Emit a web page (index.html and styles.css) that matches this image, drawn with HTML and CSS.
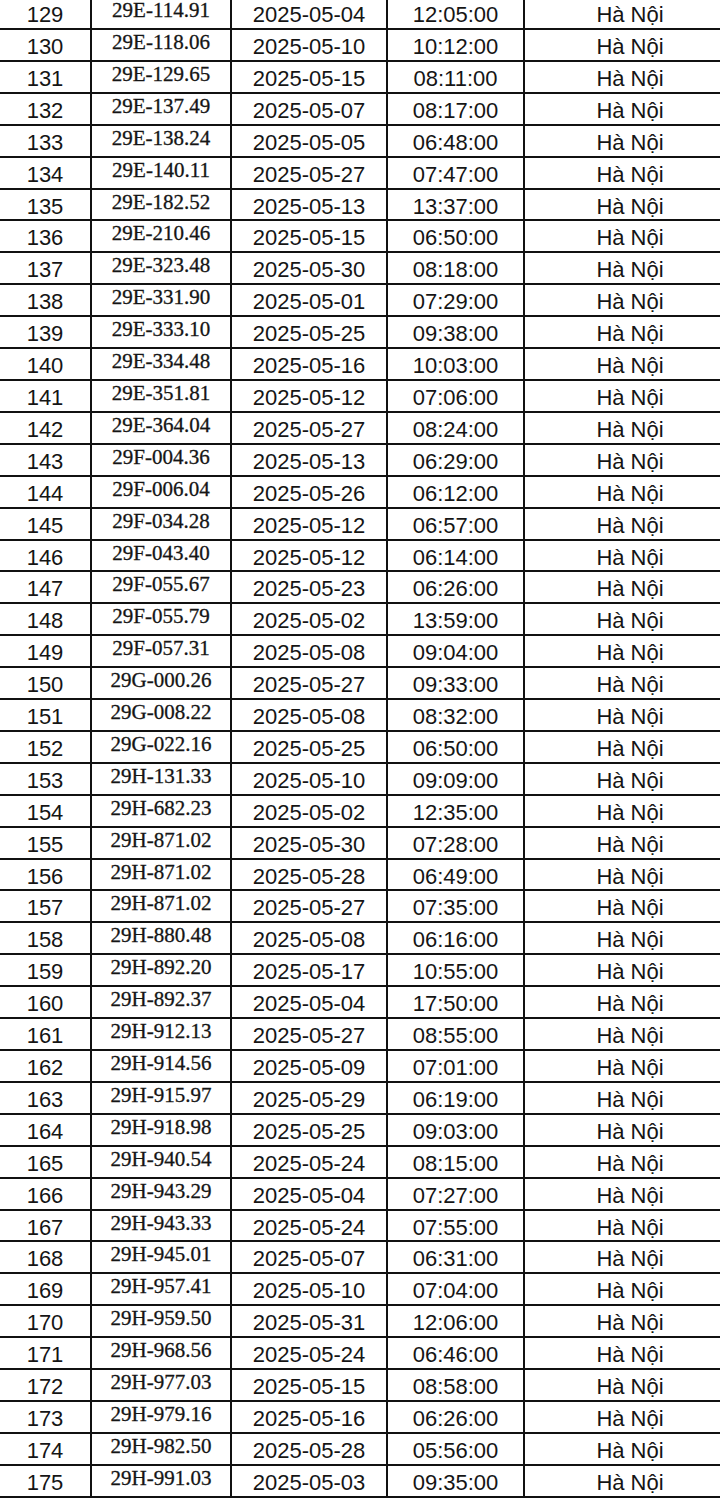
FILE: index.html
```html
<!DOCTYPE html>
<html lang="vi">
<head>
<meta charset="utf-8">
<link rel="stylesheet" href="styles.css">
</head>
<body>
<div class="sheet">
<div class="row"><div class="c n">129</div><div class="c p">29E-114.91</div><div class="c n">2025-05-04</div><div class="c n">12:05:00</div><div class="c n loc">Hà Nội</div></div>
<div class="row"><div class="c n">130</div><div class="c p">29E-118.06</div><div class="c n">2025-05-10</div><div class="c n">10:12:00</div><div class="c n loc">Hà Nội</div></div>
<div class="row"><div class="c n">131</div><div class="c p">29E-129.65</div><div class="c n">2025-05-15</div><div class="c n">08:11:00</div><div class="c n loc">Hà Nội</div></div>
<div class="row"><div class="c n">132</div><div class="c p">29E-137.49</div><div class="c n">2025-05-07</div><div class="c n">08:17:00</div><div class="c n loc">Hà Nội</div></div>
<div class="row"><div class="c n">133</div><div class="c p">29E-138.24</div><div class="c n">2025-05-05</div><div class="c n">06:48:00</div><div class="c n loc">Hà Nội</div></div>
<div class="row"><div class="c n">134</div><div class="c p">29E-140.11</div><div class="c n">2025-05-27</div><div class="c n">07:47:00</div><div class="c n loc">Hà Nội</div></div>
<div class="row"><div class="c n">135</div><div class="c p">29E-182.52</div><div class="c n">2025-05-13</div><div class="c n">13:37:00</div><div class="c n loc">Hà Nội</div></div>
<div class="row"><div class="c n">136</div><div class="c p">29E-210.46</div><div class="c n">2025-05-15</div><div class="c n">06:50:00</div><div class="c n loc">Hà Nội</div></div>
<div class="row"><div class="c n">137</div><div class="c p">29E-323.48</div><div class="c n">2025-05-30</div><div class="c n">08:18:00</div><div class="c n loc">Hà Nội</div></div>
<div class="row"><div class="c n">138</div><div class="c p">29E-331.90</div><div class="c n">2025-05-01</div><div class="c n">07:29:00</div><div class="c n loc">Hà Nội</div></div>
<div class="row"><div class="c n">139</div><div class="c p">29E-333.10</div><div class="c n">2025-05-25</div><div class="c n">09:38:00</div><div class="c n loc">Hà Nội</div></div>
<div class="row"><div class="c n">140</div><div class="c p">29E-334.48</div><div class="c n">2025-05-16</div><div class="c n">10:03:00</div><div class="c n loc">Hà Nội</div></div>
<div class="row"><div class="c n">141</div><div class="c p">29E-351.81</div><div class="c n">2025-05-12</div><div class="c n">07:06:00</div><div class="c n loc">Hà Nội</div></div>
<div class="row"><div class="c n">142</div><div class="c p">29E-364.04</div><div class="c n">2025-05-27</div><div class="c n">08:24:00</div><div class="c n loc">Hà Nội</div></div>
<div class="row"><div class="c n">143</div><div class="c p">29F-004.36</div><div class="c n">2025-05-13</div><div class="c n">06:29:00</div><div class="c n loc">Hà Nội</div></div>
<div class="row"><div class="c n">144</div><div class="c p">29F-006.04</div><div class="c n">2025-05-26</div><div class="c n">06:12:00</div><div class="c n loc">Hà Nội</div></div>
<div class="row"><div class="c n">145</div><div class="c p">29F-034.28</div><div class="c n">2025-05-12</div><div class="c n">06:57:00</div><div class="c n loc">Hà Nội</div></div>
<div class="row"><div class="c n">146</div><div class="c p">29F-043.40</div><div class="c n">2025-05-12</div><div class="c n">06:14:00</div><div class="c n loc">Hà Nội</div></div>
<div class="row"><div class="c n">147</div><div class="c p">29F-055.67</div><div class="c n">2025-05-23</div><div class="c n">06:26:00</div><div class="c n loc">Hà Nội</div></div>
<div class="row"><div class="c n">148</div><div class="c p">29F-055.79</div><div class="c n">2025-05-02</div><div class="c n">13:59:00</div><div class="c n loc">Hà Nội</div></div>
<div class="row"><div class="c n">149</div><div class="c p">29F-057.31</div><div class="c n">2025-05-08</div><div class="c n">09:04:00</div><div class="c n loc">Hà Nội</div></div>
<div class="row"><div class="c n">150</div><div class="c p">29G-000.26</div><div class="c n">2025-05-27</div><div class="c n">09:33:00</div><div class="c n loc">Hà Nội</div></div>
<div class="row"><div class="c n">151</div><div class="c p">29G-008.22</div><div class="c n">2025-05-08</div><div class="c n">08:32:00</div><div class="c n loc">Hà Nội</div></div>
<div class="row"><div class="c n">152</div><div class="c p">29G-022.16</div><div class="c n">2025-05-25</div><div class="c n">06:50:00</div><div class="c n loc">Hà Nội</div></div>
<div class="row"><div class="c n">153</div><div class="c p">29H-131.33</div><div class="c n">2025-05-10</div><div class="c n">09:09:00</div><div class="c n loc">Hà Nội</div></div>
<div class="row"><div class="c n">154</div><div class="c p">29H-682.23</div><div class="c n">2025-05-02</div><div class="c n">12:35:00</div><div class="c n loc">Hà Nội</div></div>
<div class="row"><div class="c n">155</div><div class="c p">29H-871.02</div><div class="c n">2025-05-30</div><div class="c n">07:28:00</div><div class="c n loc">Hà Nội</div></div>
<div class="row"><div class="c n">156</div><div class="c p">29H-871.02</div><div class="c n">2025-05-28</div><div class="c n">06:49:00</div><div class="c n loc">Hà Nội</div></div>
<div class="row"><div class="c n">157</div><div class="c p">29H-871.02</div><div class="c n">2025-05-27</div><div class="c n">07:35:00</div><div class="c n loc">Hà Nội</div></div>
<div class="row"><div class="c n">158</div><div class="c p">29H-880.48</div><div class="c n">2025-05-08</div><div class="c n">06:16:00</div><div class="c n loc">Hà Nội</div></div>
<div class="row"><div class="c n">159</div><div class="c p">29H-892.20</div><div class="c n">2025-05-17</div><div class="c n">10:55:00</div><div class="c n loc">Hà Nội</div></div>
<div class="row"><div class="c n">160</div><div class="c p">29H-892.37</div><div class="c n">2025-05-04</div><div class="c n">17:50:00</div><div class="c n loc">Hà Nội</div></div>
<div class="row"><div class="c n">161</div><div class="c p">29H-912.13</div><div class="c n">2025-05-27</div><div class="c n">08:55:00</div><div class="c n loc">Hà Nội</div></div>
<div class="row"><div class="c n">162</div><div class="c p">29H-914.56</div><div class="c n">2025-05-09</div><div class="c n">07:01:00</div><div class="c n loc">Hà Nội</div></div>
<div class="row"><div class="c n">163</div><div class="c p">29H-915.97</div><div class="c n">2025-05-29</div><div class="c n">06:19:00</div><div class="c n loc">Hà Nội</div></div>
<div class="row"><div class="c n">164</div><div class="c p">29H-918.98</div><div class="c n">2025-05-25</div><div class="c n">09:03:00</div><div class="c n loc">Hà Nội</div></div>
<div class="row"><div class="c n">165</div><div class="c p">29H-940.54</div><div class="c n">2025-05-24</div><div class="c n">08:15:00</div><div class="c n loc">Hà Nội</div></div>
<div class="row"><div class="c n">166</div><div class="c p">29H-943.29</div><div class="c n">2025-05-04</div><div class="c n">07:27:00</div><div class="c n loc">Hà Nội</div></div>
<div class="row"><div class="c n">167</div><div class="c p">29H-943.33</div><div class="c n">2025-05-24</div><div class="c n">07:55:00</div><div class="c n loc">Hà Nội</div></div>
<div class="row"><div class="c n">168</div><div class="c p">29H-945.01</div><div class="c n">2025-05-07</div><div class="c n">06:31:00</div><div class="c n loc">Hà Nội</div></div>
<div class="row"><div class="c n">169</div><div class="c p">29H-957.41</div><div class="c n">2025-05-10</div><div class="c n">07:04:00</div><div class="c n loc">Hà Nội</div></div>
<div class="row"><div class="c n">170</div><div class="c p">29H-959.50</div><div class="c n">2025-05-31</div><div class="c n">12:06:00</div><div class="c n loc">Hà Nội</div></div>
<div class="row"><div class="c n">171</div><div class="c p">29H-968.56</div><div class="c n">2025-05-24</div><div class="c n">06:46:00</div><div class="c n loc">Hà Nội</div></div>
<div class="row"><div class="c n">172</div><div class="c p">29H-977.03</div><div class="c n">2025-05-15</div><div class="c n">08:58:00</div><div class="c n loc">Hà Nội</div></div>
<div class="row"><div class="c n">173</div><div class="c p">29H-979.16</div><div class="c n">2025-05-16</div><div class="c n">06:26:00</div><div class="c n loc">Hà Nội</div></div>
<div class="row"><div class="c n">174</div><div class="c p">29H-982.50</div><div class="c n">2025-05-28</div><div class="c n">05:56:00</div><div class="c n loc">Hà Nội</div></div>
<div class="row"><div class="c n">175</div><div class="c p">29H-991.03</div><div class="c n">2025-05-03</div><div class="c n">09:35:00</div><div class="c n loc">Hà Nội</div></div>
</div>
</body>
</html>
```

FILE: styles.css
```css
html, body {
  margin: 0;
  padding: 0;
  background: #ffffff;
  overflow: hidden;
}

body {
  width: 720px;
  height: 1499px;
}

.sheet {
  margin-top: -1.9px;
  width: 735px;
}

.row {
  display: grid;
  grid-template-columns: 92px 140px 156px 137px 210px;
  height: 31.913px;
  box-sizing: border-box;
  border-bottom: 2px solid #111111;
}

.c {
  box-sizing: border-box;
  border-right: 2px solid #111111;
  text-align: center;
  color: #151515;
  white-space: nowrap;
  overflow: hidden;
}

.c.loc {
  border-right: none;
}

.n {
  font-family: "Liberation Sans", Arial, sans-serif;
  font-size: 22px;
  line-height: 24px;
  padding-top: 5px;
}

.p {
  font-family: "Liberation Serif", "Times New Roman", serif;
  font-size: 21px;
  line-height: 24px;
  padding-top: 0;
  -webkit-text-stroke: 0.3px #151515;
}
```
